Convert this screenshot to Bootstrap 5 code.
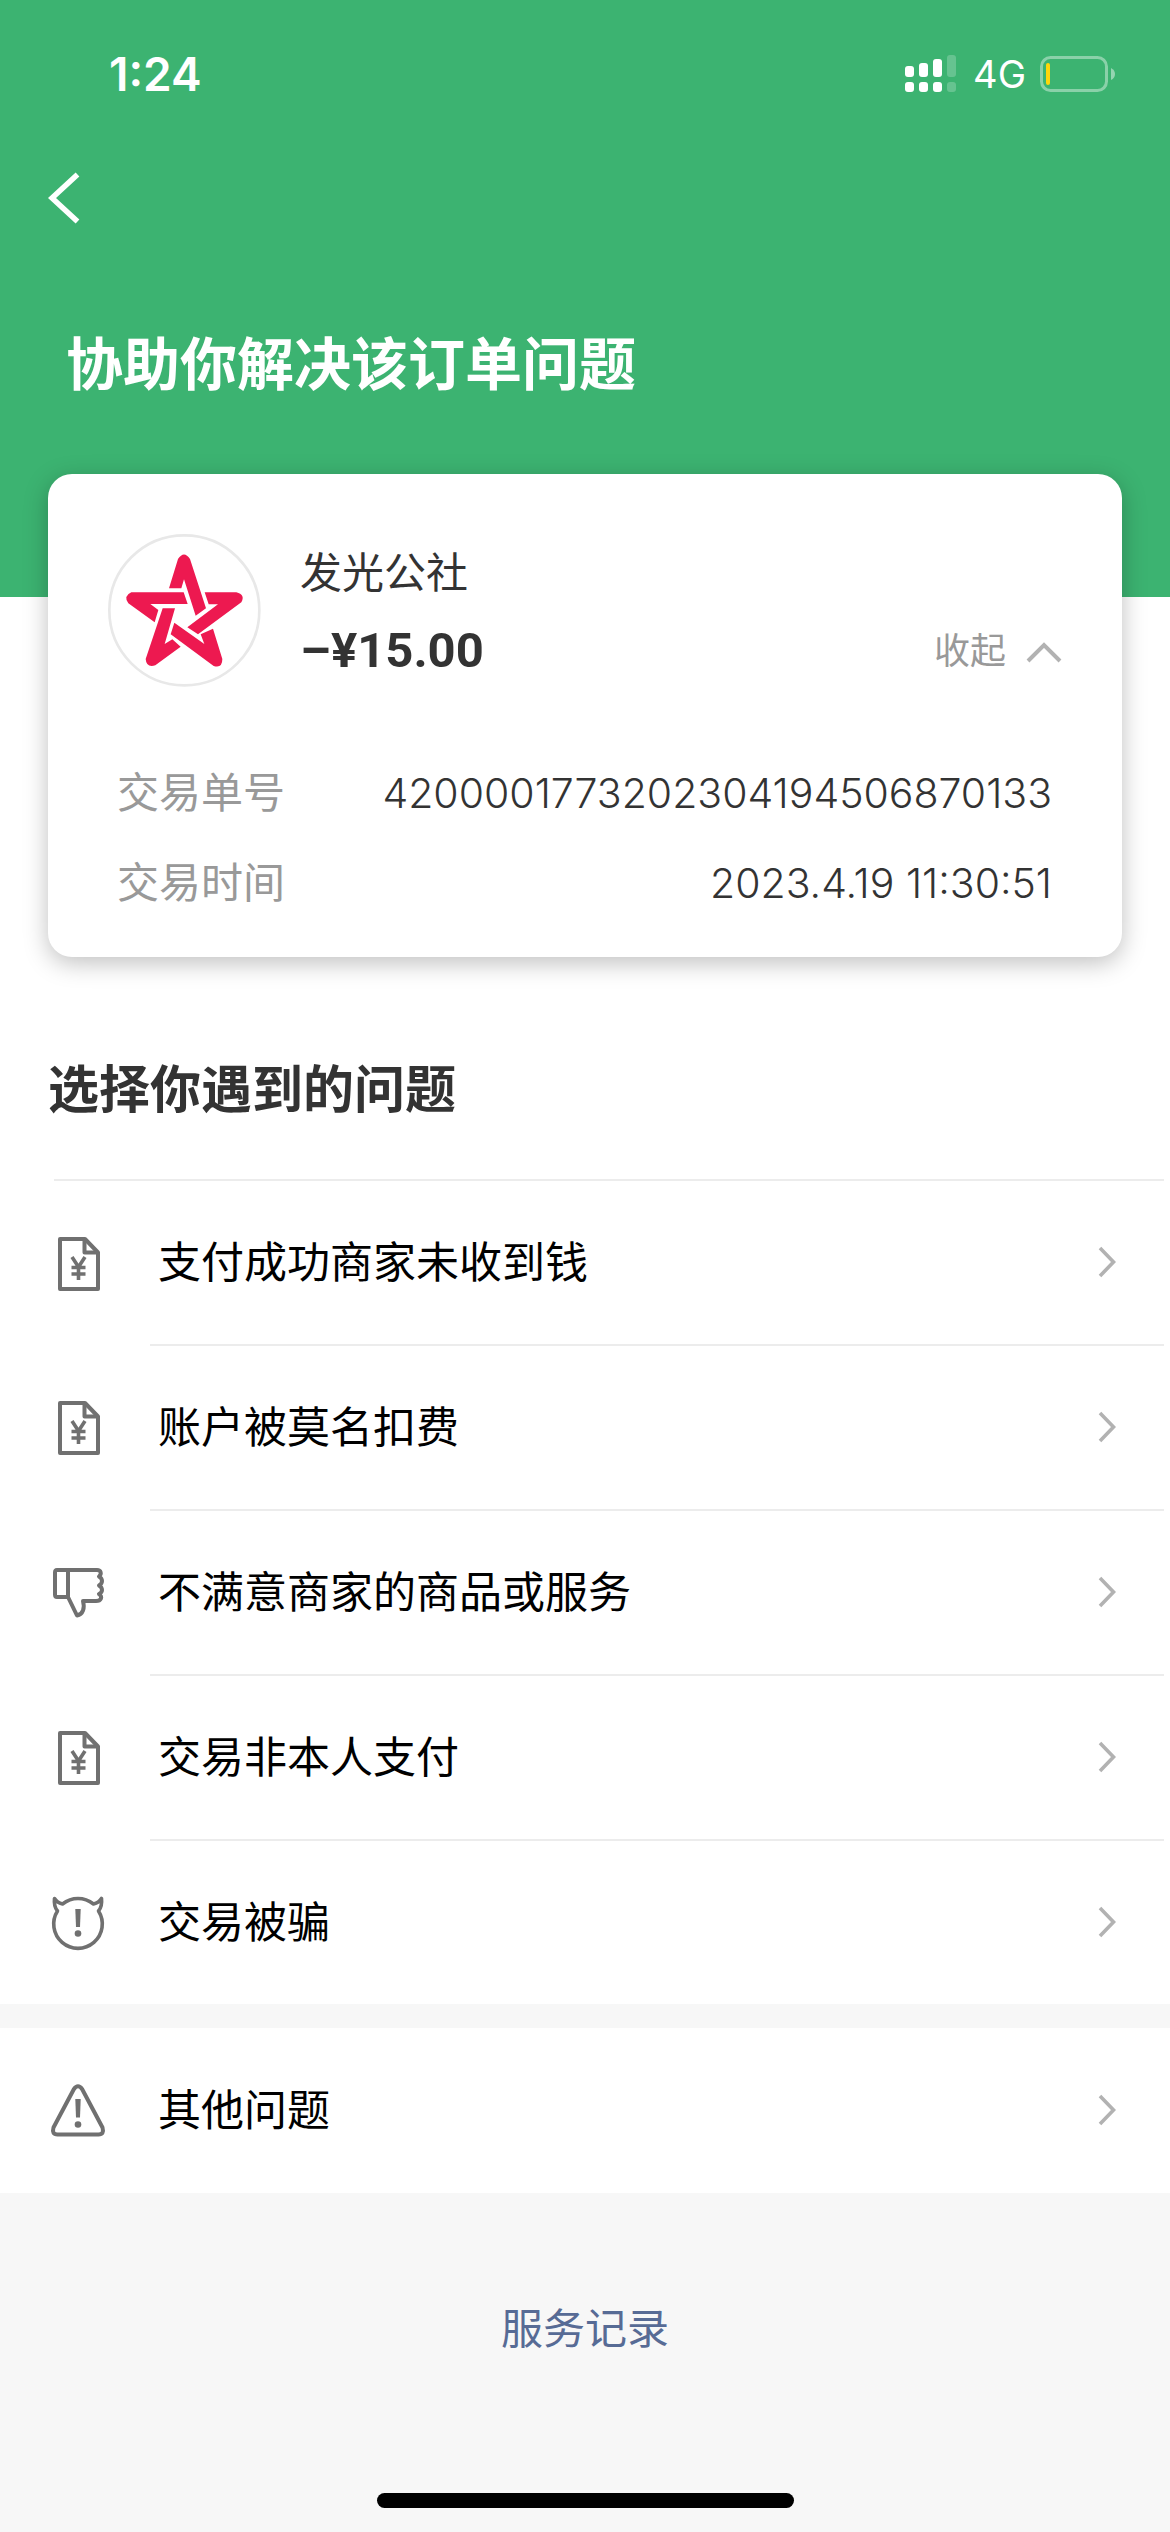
<!DOCTYPE html>
<html lang="zh-CN">
<head>
<meta charset="utf-8">
<meta name="viewport" content="width=device-width, initial-scale=1">
<title>协助你解决该订单问题</title>
<link href="https://cdn.jsdelivr.net/npm/bootstrap@5.3.0/dist/css/bootstrap.min.css" rel="stylesheet">
<style>
  body { font-family: Inter, "Noto Sans CJK SC", sans-serif; font-size: 42px; line-height: 60px; color: #333; background: #f7f7f7; }
  svg { display: block; flex: none; }
  .hero { background: #3cb371; padding-bottom: 192px; }
  .status-bar { height: 148px; padding: 0 54px 0 109px; }
  .clock { font-size: 46px; font-weight: 600; }
  .network { font-size: 38px; margin: 0 14px 0 16px; }
  .nav-row { height: 100px; padding: 0 48px; }
  .hero-title { font-size: 57px; line-height: 80px; margin: 77px 66px 0; font-weight: 700; }
  .order-card { margin: -123px 48px 0; padding: 60px 60px 44px; border-radius: 24px; box-shadow: 0 6px 24px rgba(0, 0, 0, .25); }
  .shop-text { gap: 18px; margin: 2px 0 0 39px; }
  .amount { font-family: Roboto, sans-serif; font-size: 49px; font-weight: 700; }
  .fold-btn { font-size: 36px; color: #999; gap: 20px; line-height: 60px; }
  .details { margin: 76px 10px 0 9px; row-gap: 30px; }
  .muted-label { color: #999; }
  .figures { font-size: 41px; font-weight: 300; }
  .section-title { font-size: 51px; line-height: 70px; margin: 98px 48px 54px; font-weight: 700; }
  .top-rule { margin: 0 6px 0 54px; border-top: 2px solid #ececec; opacity: 1; }
  .issue { height: 165px; padding: 0 6px 0 48px; color: #000; }
  .issue-first { height: 163px; }
  .issue-icon { width: 102px; }
  .issue-body { padding: 0 47px 2px 8px; font-size: 43px; }
  .ruled { border-top: 2px solid #ececec; }
  .record-link { color: #576b95; margin-top: 106px; }
  .home-bar { width: 417px; height: 15px; border-radius: 8px; margin-bottom: 24px; background: #000; }
</style>
</head>
<body>
<svg width="0" height="0" class="position-absolute" aria-hidden="true">
  <defs>
    <symbol id="doc" viewBox="0 0 60 60">
      <g fill="none" stroke="#707070" stroke-width="4" stroke-linejoin="round">
        <path d="M12 6H37L50 19.500V56H12Z"/><path d="M36.500 7V19.500H49"/>
        <path d="M24 24l6.500 10 6.500-10M30.500 34v13M23.500 34.500h14M23.500 41h14" stroke-width="3.600"/>
      </g>
    </symbol>
    <symbol id="down" viewBox="0 0 60 60">
      <g fill="none" stroke="#707070" stroke-width="4" stroke-linejoin="round">
        <path d="M9 8H49C53 8 54 12 51 14.500C55 17 55 21 51 23.500C55 26 55 30 51 32C55 35 53 39 48 39H35C37 46 35 52.500 29 53.500L20 35H9C7.500 35 7 34 7 32.500V10.500C7 9 7.500 8 9 8Z"/><path d="M20 8V35"/>
      </g>
    </symbol>
    <symbol id="devil" viewBox="0 0 60 60">
      <path d="M14.500 12C19 8.500 24 6.500 30 6.500S41 8.500 45.500 12C49.500 11 52 9 53.500 6.500C54 11 53 16 50.500 19A24.300 24.300 0 1 1 9.500 19C7 16 6 11 6.500 6.500C8 9 10.500 11 14.500 12Z" fill="none" stroke="#707070" stroke-width="3.600" stroke-linejoin="round"/>
      <path d="M27.300 17h5.400l-.7 18h-4Z" fill="#707070"/><circle cx="30" cy="41.500" r="3.300" fill="#707070"/>
    </symbol>
    <symbol id="warn" viewBox="0 0 60 60">
      <path d="M25.800 8.200Q30 2.500 34.200 8.200L54.500 46.500Q56.500 53.500 50.500 53.500H9.500Q3.500 53.500 5.500 46.500Z" fill="none" stroke="#707070" stroke-width="4" stroke-linejoin="round"/>
      <path d="M27.300 18h5.400l-.7 18.500h-4Z" fill="#707070"/><circle cx="30" cy="43.500" r="3.300" fill="#707070"/>
    </symbol>
    <symbol id="next" viewBox="0 0 20 34">
      <path d="M3 3L16.500 17L3 31" fill="none" stroke="#b2b2b2" stroke-width="3.600"/>
    </symbol>
  </defs>
</svg>
<div class="d-flex flex-column min-vh-100">
  <header class="hero text-white">
    <div class="status-bar d-flex align-items-center justify-content-between">
      <span class="clock">1:24</span>
      <div class="d-flex align-items-center">
        <svg width="52" height="38" viewBox="0 0 52 38" fill="#fff" aria-hidden="true">
          <rect x="0" y="11" width="9" height="11" rx="3"/><rect x="14" y="8" width="9" height="14" rx="3"/><rect x="28" y="4" width="9" height="18" rx="3"/><rect x="42" y="0" width="9" height="22" rx="3" opacity=".22"/>
          <rect x="0" y="27" width="9" height="10" rx="3"/><rect x="14" y="27" width="9" height="10" rx="3"/><rect x="28" y="27" width="9" height="10" rx="3"/><rect x="42" y="27" width="9" height="10" rx="3" opacity=".22"/>
        </svg>
        <span class="network">4G</span>
        <svg width="76" height="36" viewBox="0 0 76 36" aria-hidden="true">
          <rect x="1.500" y="1.500" width="65" height="33" rx="9" fill="none" stroke="#fff" stroke-opacity=".4" stroke-width="3"/>
          <rect x="6" y="7" width="4" height="22" rx="2" fill="#ffd60a"/>
          <path d="M71 12Q75 14 75 18T71 24Z" fill="#fff" opacity=".45"/>
        </svg>
      </div>
    </div>
    <nav class="nav-row d-flex align-items-center">
      <button type="button" class="btn border-0 p-0" aria-label="返回">
        <svg width="32" height="52" viewBox="0 0 32 52"><path d="M29.500 2.500L4 26L29.500 49.500" fill="none" stroke="#fff" stroke-width="5.500"/></svg>
      </button>
    </nav>
    <h1 class="hero-title">协助你解决该订单问题</h1>
  </header>

  <main class="bg-white">
    <section class="order-card card border-0 bg-white">
      <div class="d-flex align-items-center">
        <svg width="153" height="153" viewBox="235 222 459 459" role="img" aria-label="发光公社">
          <circle cx="464" cy="451" r="225" fill="#fff" stroke="#e8e8e8" stroke-width="8"/>
          <g fill="#ed1950">
            <path d="M418 385L445 297Q463 270 481 297L529 445L498 467L463 358L455 385Z"/>
            <path d="M525 397H620Q648 404 635 427L505 523L473 502L565 433H537Z"/>
            <path d="M550 506L578 597Q578 626 552 618L423 523L434 488L524 552L513 523Z"/>
            <path d="M399 445H436L405 552L428 538L453 560L377 616Q350 624 348 597Z"/>
            <path d="M305 397H462L474 432H362L386 450L375 487L296 430Q280 408 305 397Z"/>
          </g>
        </svg>
        <div class="shop-text d-flex flex-column flex-grow-1">
          <div>发光公社</div>
          <div class="d-flex align-items-center justify-content-between">
            <span class="amount">–¥15.00</span>
            <button type="button" class="fold-btn btn border-0 p-0 d-flex align-items-center">收起
              <svg width="36" height="24" viewBox="0 0 36 24" aria-hidden="true"><path d="M2 22L18 6L34 22" fill="none" stroke="#b2b2b2" stroke-width="4"/></svg>
            </button>
          </div>
        </div>
      </div>
      <div class="details d-flex flex-column">
        <div class="d-flex justify-content-between"><span class="muted-label">交易单号</span><span class="figures">4200001773202304194506870133</span></div>
        <div class="d-flex justify-content-between"><span class="muted-label">交易时间</span><span class="figures">2023.4.19 11:30:51</span></div>
      </div>
    </section>

    <h2 class="section-title">选择你遇到的问题</h2>
    <hr class="top-rule">
    <div>
      <a href="#" class="issue issue-first d-flex text-decoration-none">
        <span class="issue-icon d-flex align-items-center"><svg width="60" height="60"><use href="#doc"/></svg></span>
        <span class="issue-body d-flex flex-grow-1 align-items-center justify-content-between">支付成功商家未收到钱<svg width="20" height="34"><use href="#next"/></svg></span>
      </a>
      <a href="#" class="issue d-flex text-decoration-none">
        <span class="issue-icon d-flex align-items-center"><svg width="60" height="60"><use href="#doc"/></svg></span>
        <span class="issue-body ruled d-flex flex-grow-1 align-items-center justify-content-between">账户被莫名扣费<svg width="20" height="34"><use href="#next"/></svg></span>
      </a>
      <a href="#" class="issue d-flex text-decoration-none">
        <span class="issue-icon d-flex align-items-center"><svg width="60" height="60"><use href="#down"/></svg></span>
        <span class="issue-body ruled d-flex flex-grow-1 align-items-center justify-content-between">不满意商家的商品或服务<svg width="20" height="34"><use href="#next"/></svg></span>
      </a>
      <a href="#" class="issue d-flex text-decoration-none">
        <span class="issue-icon d-flex align-items-center"><svg width="60" height="60"><use href="#doc"/></svg></span>
        <span class="issue-body ruled d-flex flex-grow-1 align-items-center justify-content-between">交易非本人支付<svg width="20" height="34"><use href="#next"/></svg></span>
      </a>
      <a href="#" class="issue d-flex text-decoration-none">
        <span class="issue-icon d-flex align-items-center"><svg width="60" height="60"><use href="#devil"/></svg></span>
        <span class="issue-body ruled d-flex flex-grow-1 align-items-center justify-content-between">交易被骗<svg width="20" height="34"><use href="#next"/></svg></span>
      </a>
    </div>
  </main>

  <section class="bg-white mt-4">
    <a href="#" class="issue d-flex text-decoration-none">
      <span class="issue-icon d-flex align-items-center"><svg width="60" height="60"><use href="#warn"/></svg></span>
      <span class="issue-body d-flex flex-grow-1 align-items-center justify-content-between">其他问题<svg width="20" height="34"><use href="#next"/></svg></span>
    </a>
  </section>

  <a href="#" class="record-link text-decoration-none align-self-center">服务记录</a>
  <div class="home-bar mt-auto align-self-center"></div>
</div>
<script src="https://cdn.jsdelivr.net/npm/bootstrap@5.3.0/dist/js/bootstrap.bundle.min.js"></script>
</body>
</html>
